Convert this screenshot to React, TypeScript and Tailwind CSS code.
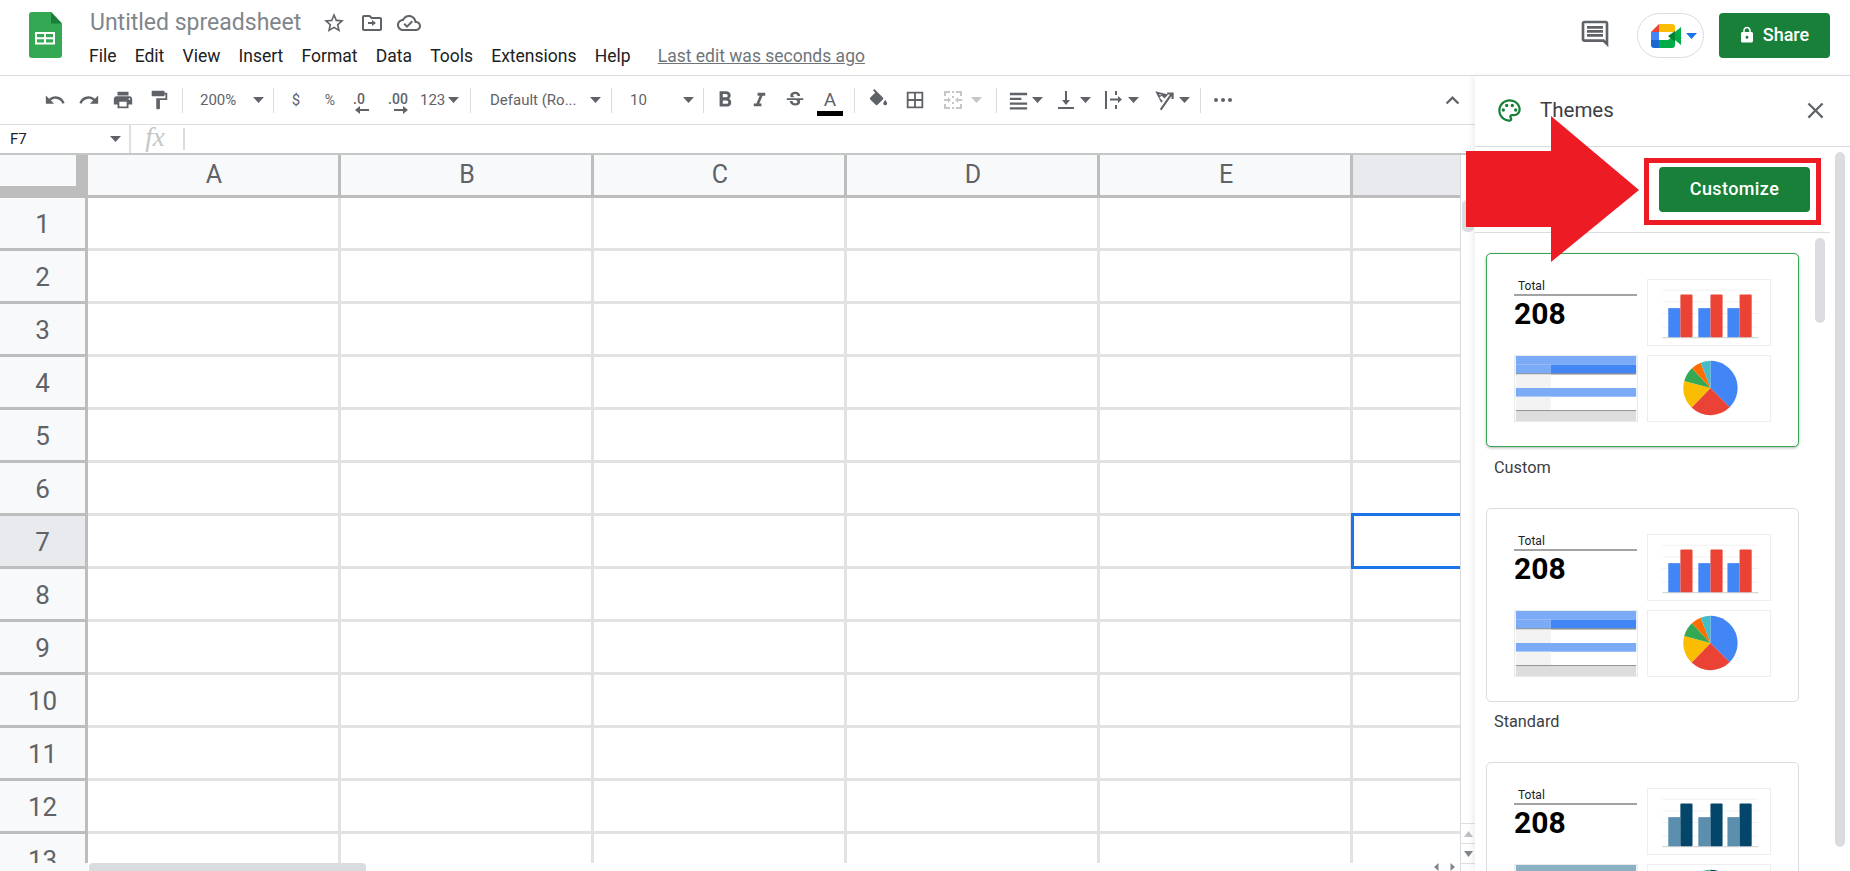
const columns = ["A", "B", "C", "D", "E"];
const rows = [1, 2, 3, 4, 5, 6, 7, 8, 9, 10, 11, 12, 13];
const menu = ["File", "Edit", "View", "Insert", "Format", "Data", "Tools", "Extensions", "Help"];

function Icon({ d, size = 24, className = "" }: { d: string; size?: number; className?: string }) {
  return (
    <svg width={size} height={size} viewBox="0 0 24 24" className={`fill-current ${className}`}>
      <path d={d} fillRule="evenodd" />
    </svg>
  );
}

function Caret({ color = "#5f6368", light = false }: { color?: string; light?: boolean }) {
  return (
    <svg width="11" height="6" viewBox="0 0 11 6" className="shrink-0">
      <path d="M0 0h11L5.5 6z" fill={light ? "#c4c7c5" : color} />
    </svg>
  );
}

function Sep() {
  return <div className="w-px h-[25px] bg-[#dadce0] shrink-0" />;
}

function Btn({ w, d, size = 22 }: { w: string; d: string; size?: number }) {
  return (
    <div className={`${w} flex items-center justify-center text-[#5f6368] shrink-0`}>
      <Icon d={d} size={size} />
    </div>
  );
}

const paths = {
  undo: "M12.5 8c-2.65 0-5.05.99-6.9 2.6L2 7v9h9l-3.62-3.62c1.39-1.16 3.16-1.88 5.12-1.88 3.54 0 6.55 2.31 7.6 5.5l2.37-.78C21.08 11.03 17.15 8 12.5 8z",
  redo: "M18.4 10.6C16.55 8.99 14.15 8 11.5 8c-4.65 0-8.58 3.03-9.96 7.22L3.9 16c1.05-3.19 4.05-5.5 7.6-5.5 1.95 0 3.73.72 5.12 1.88L13 16h9V7l-3.6 3.6z",
  print: "M19 8H5c-1.66 0-3 1.34-3 3v6h4v4h12v-4h4v-6c0-1.66-1.34-3-3-3zm-3 11H8v-5h8v5zm3-7c-.55 0-1-.45-1-1s.45-1 1-1 1 .45 1 1-.45 1-1 1zm-1-9H6v4h12V3z",
  paint: "M18 4V3c0-.55-.45-1-1-1H5c-.55 0-1 .45-1 1v4c0 .55.45 1 1 1h12c.55 0 1-.45 1-1V6h1v4H9v11c0 .55.45 1 1 1h2c.55 0 1-.45 1-1v-9h8V4h-3z",
  bold: "M15.6 10.79c.97-.67 1.65-1.77 1.65-2.79 0-2.26-1.75-4-4-4H7v14h7.04c2.09 0 3.71-1.7 3.71-3.79 0-1.52-.86-2.82-2.15-3.42zM10 6.5h3c.83 0 1.5.67 1.5 1.5s-.67 1.5-1.5 1.5h-3v-3zm3.5 9H10v-3h3.5c.83 0 1.5.67 1.5 1.5s-.67 1.5-1.5 1.5z",
  italic: "M10 4v3h2.21l-3.42 8H6v3h8v-3h-2.21l3.42-8H18V4z",
  strike: "M6.85 7.08C6.85 4.37 9.45 3 12.24 3c1.64 0 3 .49 3.9 1.28.77.65 1.46 1.73 1.46 3.24h-3.01c0-.31-.05-.59-.15-.85-.29-.86-1.2-1.28-2.25-1.28-1.86 0-2.34 1.02-2.34 1.7 0 .48.25.88.74 1.21.38.25.77.48 1.41.7H7.39c-.21-.34-.54-.89-.54-1.92zM21 12v-2H3v2h9.62c1.15.45 1.96.75 1.96 1.97 0 1-.81 1.67-2.28 1.67-1.54 0-2.93-.54-2.93-2.51H6.4c0 .55.08 1.13.24 1.58.81 2.29 3.29 3.3 5.67 3.3 2.27 0 5.3-.89 5.3-4.05 0-.3-.01-1.16-.48-1.94H21V12z",
  fill: "M16.56 8.94L7.62 0 6.21 1.41l2.38 2.38-5.15 5.15c-.59.59-.59 1.54 0 2.12l5.5 5.5c.29.29.68.44 1.06.44s.77-.15 1.06-.44l5.5-5.5c.59-.58.59-1.53 0-2.12zM19 11.5s-2 2.17-2 3.5c0 1.1.9 2 2 2s2-.9 2-2c0-1.33-2-3.5-2-3.5z",
  borders: "M3 3v18h18V3H3zm8 16H5v-6h6v6zm0-8H5V5h6v6zm8 8h-6v-6h6v6zm0-8h-6V5h6v6z",
  merge: "M3 3h6v2H5v3H3zM15 3h6v5h-2V5h-4zM3 16h2v3h4v2H3zM19 16h2v5h-6v-2h4zM11 3h2v2h-2zM11 8h2v2h-2zM11 14h2v2h-2zM11 19h2v2h-2zM3 11h4V9l3 3-3 3v-2H3zM21 11h-4V9l-3 3 3 3v-2h4z",
  align: "M3 4h18v2.5H3zM3 9h12v2.5H3zM3 14h18v2.5H3zM3 19h18v2.5H3z",
  valign: "M4 19h16v2H4zM11 3h2v9h3l-4 5-4-5h3z",
  wrap: "M3 3h2v18H3zM13 3h2v4h-2zM13 17h2v4h-2zM13 10.5h3V8l4 3.5-4 3.5v-2.5H8v-2h5z",
  rotate: "M3 4l12 3-3.5 3.5L9 8l-2.2 1.8 3.2 3.2-1.5 1.5zM6.2 6.6l1.3 1.3 1.4-.9zM20 5v6h-2V8.4L8.7 21.7l-1.4-1.4L16.6 7H14V5z",
  star: "M22 9.24l-7.19-.62L12 2 9.19 8.63 2 9.24l5.46 4.73L5.82 21 12 17.27 18.18 21l-1.63-7.03L22 9.24zM12 15.4l-3.76 2.27 1-4.28-3.32-2.88 4.38-.38L12 6.1l1.71 4.04 4.38.38-3.32 2.88 1 4.28L12 15.4z",
  move: "M20 6h-8l-2-2H4c-1.1 0-2 .9-2 2v12c0 1.1.9 2 2 2h16c1.1 0 2-.9 2-2V8c0-1.1-.9-2-2-2zm0 12H4V6h5.17l2 2H20v10zm-8-3v-2H8v-2h4V9l4 3-4 3z",
  cloud: "M19.35 10.04C18.67 6.59 15.64 4 12 4 9.11 4 6.6 5.64 5.35 8.04 2.34 8.36 0 10.91 0 14c0 3.31 2.69 6 6 6h13c2.76 0 5-2.24 5-5 0-2.64-2.05-4.78-4.65-4.96zM19 18H6c-2.21 0-4-1.79-4-4 0-2.05 1.53-3.76 3.56-3.97l1.07-.11.5-.95C8.08 7.14 9.94 6 12 6c2.62 0 4.88 1.86 5.39 4.43l.3 1.5 1.53.11c1.56.1 2.78 1.41 2.78 2.96 0 1.65-1.35 3-3 3zM10 17l-3.5-3.5 1.41-1.41L10 14.18l4.6-4.6 1.41 1.41z",
  comment: "M21.99 4c0-1.1-.89-2-1.99-2H4c-1.1 0-2 .9-2 2v12c0 1.1.9 2 2 2h14l4 4-.01-18zM20 4v13.17L18.83 16H4V4h16zM6 12h12v2H6zm0-3h12v2H6zm0-3h12v2H6z",
  palette: "M12 2C6.49 2 2 6.49 2 12s4.49 10 10 10c1.38 0 2.5-1.12 2.5-2.5 0-.61-.23-1.2-.64-1.67-.08-.1-.13-.21-.13-.33 0-.28.22-.5.5-.5H16c3.31 0 6-2.69 6-6 0-4.96-4.49-9-10-9zM12 4c4.41 0 8 3.14 8 7 0 2.21-1.79 4-4 4h-1.77c-1.38 0-2.5 1.12-2.5 2.5 0 .6.22 1.18.61 1.63.05.06.16.19.16.37 0 .28-.22.5-.5.5-4.41 0-8-3.59-8-8s3.59-8 8-8zM6.5 10a1.5 1.5 0 1 0 0 3 1.5 1.5 0 0 0 0-3zM9.5 6a1.5 1.5 0 1 0 0 3 1.5 1.5 0 0 0 0-3zM14.5 6a1.5 1.5 0 1 0 0 3 1.5 1.5 0 0 0 0-3zM17.5 10a1.5 1.5 0 1 0 0 3 1.5 1.5 0 0 0 0-3z",
  close: "M19 6.41L17.59 5 12 10.59 6.41 5 5 6.41 10.59 12 5 17.59 6.41 19 12 13.41 17.59 19 19 17.59 13.41 12z",
  lock: "M18 8h-1V6c0-2.76-2.24-5-5-5S7 3.24 7 6v2H6c-1.1 0-2 .9-2 2v10c0 1.1.9 2 2 2h12c1.1 0 2-.9 2-2V10c0-1.1-.9-2-2-2zM9 8V6c0-1.66 1.34-3 3-3s3 1.34 3 3v2H9zm3 9c-1.1 0-2-.9-2-2s.9-2 2-2 2 .9 2 2-.9 2-2 2z",
  up: "M7.41 15.41L12 10.83l4.59 4.58L18 14l-6-6-6 6z",
};

function SheetsLogo() {
  return (
    <svg width="33" height="46" viewBox="0 0 33 46" className="shrink-0">
      <path d="M3 0h19l11 11.5V43a3 3 0 0 1-3 3H3a3 3 0 0 1-3-3V3a3 3 0 0 1 3-3z" fill="#34a853" />
      <path d="M22 0l11 11.5H22z" fill="#188038" />
      <path d="M6 20h20v12.5H6zM8 22v3.2h7V22zm9 0v3.2h7V22zM8 27.2v3.3h7v-3.3zm9 0v3.3h7v-3.3z" fill="#fff" fillRule="evenodd" />
    </svg>
  );
}

function MeetLogo() {
  return (
    <svg width="30" height="24" viewBox="0 0 30 24">
      <path d="M8 0L0 8h8z" fill="#ea4335" />
      <path d="M8 0h13a3 3 0 0 1 3 3v5H8z" fill="#fbbc04" />
      <path d="M0 8h8v8H0z" fill="#4285f4" />
      <path d="M0 16h8v8H3a3 3 0 0 1-3-3z" fill="#1967d2" />
      <path d="M8 16h9l7-5v10a3 3 0 0 1-3 3H8z" fill="#00ac47" />
      <path d="M17 12l7-5v11z" fill="#00832d" />
      <path d="M24 8l6-5v18l-6-5z" fill="#00ac47" />
      <path d="M8 8h9v8H8z" fill="#fff" />
    </svg>
  );
}

type Palette = {
  light: string;
  dark: string;
  barA: string;
  barB: string;
  slices: [number, string][];
};

function slicePath(from: number, to: number) {
  const cx = 63.5;
  const cy = 33;
  const r = 28;
  const a = ((from - 90) * Math.PI) / 180;
  const b = ((to - 90) * Math.PI) / 180;
  const large = to - from > 180 ? 1 : 0;
  return `M${cx} ${cy}L${cx + r * Math.cos(a)} ${cy + r * Math.sin(a)}A${r} ${r} 0 ${large} 1 ${cx + r * Math.cos(b)} ${cy + r * Math.sin(b)}Z`;
}

function ThemeCard({ label, selected, palette }: { label?: string; selected?: boolean; palette: Palette }) {
  let start = 0;
  return (
    <div className="h-[254.5px] shrink-0">
      <div
        className={`w-[313px] h-[194px] rounded-[5px] bg-white pl-[27px] pt-[25px] border ${
          selected ? "border-[#34a853] shadow-[0_1px_3px_rgba(60,64,67,0.4)]" : "border-[#dadce0]"
        }`}
      >
        <div className="grid grid-cols-[124px_124px] grid-rows-[67px_67px] gap-[9px]">
          <div className="text-black">
            <div className="pl-[4px] h-[15px] text-[12px] leading-[15px] text-[#202124]">Total</div>
            <div className="h-[2px] w-[123px] bg-[#a3a3a3]" />
            <div className="text-[30px] leading-[36px] font-bold">208</div>
          </div>
          <svg width="124" height="67" viewBox="0 0 124 67" className="border border-[#eeeeee]">
            {[10, 22, 34, 48].map((y) => (
              <rect key={y} x="14" y={y} width="99" height="1" fill="#f1f1f1" />
            ))}
            <rect x="14" y="59" width="99" height="1" fill="#cccccc" />
            {[20, 51, 81].map((x) => (
              <g key={x}>
                <rect x={x} y="29" width="12.5" height="30" fill={palette.barA} />
                <rect x={x + 12.5} y="15" width="12.5" height="44" rx="1" fill={palette.barB} />
              </g>
            ))}
          </svg>
          <svg width="124" height="67" viewBox="0 0 124 67" className="border border-[#e8eaed]">
            <rect x="0" y="0" width="124" height="9" fill={palette.light} />
            <rect x="0" y="9" width="36" height="9" fill={palette.light} />
            <rect x="36" y="9" width="88" height="9" fill={palette.dark} />
            <rect x="0" y="18" width="124" height="1" fill="#666666" />
            <rect x="0" y="19" width="36" height="14" fill="#f3f3f3" />
            <rect x="0" y="33" width="124" height="9" fill={palette.light} />
            <rect x="0" y="42" width="36" height="14" fill="#f3f3f3" />
            <rect x="0" y="56" width="124" height="1" fill="#666666" />
            <rect x="0" y="57" width="124" height="10" fill="#dddddd" />
          </svg>
          <svg width="124" height="67" viewBox="0 0 124 67" className="border border-[#eeeeee]">
            {palette.slices.map(([end, color]) => {
              const path = slicePath(start, end);
              start = end;
              return <path key={end} d={path} fill={color} />;
            })}
          </svg>
        </div>
      </div>
      {label && <div className="pl-[8px] pt-[9.5px] text-[16.3px] leading-[22px] text-[#3c4043]">{label}</div>}
    </div>
  );
}

const defaultSlices: [number, string][] = [
  [135, "#4285f4"],
  [224, "#ea4335"],
  [285, "#fbbc04"],
  [317, "#34a853"],
  [339, "#ff6d01"],
  [360, "#46bdc6"],
];

const themes: { label?: string; selected?: boolean; palette: Palette }[] = [
  { label: "Custom", selected: true, palette: { light: "#7baaf7", dark: "#4285f4", barA: "#4285f4", barB: "#ea4335", slices: defaultSlices } },
  { label: "Standard", palette: { light: "#7baaf7", dark: "#4285f4", barA: "#4285f4", barB: "#ea4335", slices: defaultSlices } },
  {
    palette: {
      light: "#8ab2c5",
      dark: "#03466a",
      barA: "#5b8fad",
      barB: "#03466a",
      slices: [
        [135, "#03466a"],
        [224, "#5b8fad"],
        [285, "#8ab2c5"],
        [317, "#2e9e8f"],
        [339, "#3cb58f"],
        [360, "#46bd9a"],
      ],
    },
  },
];

function Toolbar() {
  return (
    <div className="h-[49px] shrink-0 border-b border-[#dadce0] flex items-center text-[15px] text-[#5f6368] pl-[38px]">
      <Btn w="w-[34px]" d={paths.undo} />
      <Btn w="w-[34px]" d={paths.redo} />
      <Btn w="w-[34px]" d={paths.print} />
      <Btn w="w-[38px]" d={paths.paint} />
      <div className="w-[4px]" />
      <Sep />
      <div className="w-[90px] flex items-center justify-between pl-[17px] pr-[9px]">
        <span>200%</span>
        <Caret />
      </div>
      <Sep />
      <div className="w-[196px] flex items-center pl-[5px]">
        <span className="w-[34px] text-center">$</span>
        <span className="w-[34px] text-center text-[14px]">%</span>
        <div className="w-[24px] flex flex-col items-center">
          <span className="text-[14px] leading-[14px] font-medium">.0</span>
          <svg width="14" height="8" viewBox="0 0 14 8" className="-mb-[6px] ml-[6px]">
            <path d="M0 4l5-4v3h9v2H5v3z" fill="#5f6368" />
          </svg>
        </div>
        <div className="w-[34px] ml-[10px] flex flex-col items-center">
          <span className="text-[14px] leading-[14px] font-medium">.00</span>
          <svg width="14" height="8" viewBox="0 0 14 8" className="-mb-[6px] ml-[6px]">
            <path d="M14 4L9 0v3H0v2h9v3z" fill="#5f6368" />
          </svg>
        </div>
        <span className="ml-[5px]">123</span>
        <span className="ml-[3px]">
          <Caret />
        </span>
      </div>
      <Sep />
      <div className="w-[140px] flex items-center justify-between pl-[19px] pr-[10px]">
        <span>Default (Ro...</span>
        <Caret />
      </div>
      <Sep />
      <div className="w-[91px] flex items-center justify-between pl-[18px] pr-[9px]">
        <span className="text-[#5f6368]">10</span>
        <Caret />
      </div>
      <Sep />
      <div className="w-[150px] flex items-center pl-[4px]">
        <Btn w="w-[34px]" d={paths.bold} size={26} />
        <Btn w="w-[35px]" d={paths.italic} size={23} />
        <Btn w="w-[35px]" d={paths.strike} size={22} />
        <div className="w-[36px] flex flex-col items-center">
          <span className="text-[19px] leading-[20px]">A</span>
          <div className="w-[26px] h-[5px] bg-black mt-[1px] -mb-[6px]" />
        </div>
      </div>
      <Sep />
      <div className="w-[141px] flex items-center pl-[6px]">
        <Btn w="w-[34px]" d={paths.fill} size={23} />
        <Btn w="w-[40px]" d={paths.borders} />
        <div className="w-[36px] flex items-center justify-center text-[#c4c7c5]">
          <Icon d={paths.merge} size={24} />
        </div>
        <Caret light />
      </div>
      <Sep />
      <div className="w-[203px] flex items-center pl-[8px]">
        <Btn w="w-[26px]" d={paths.align} size={23} />
        <span className="mr-[9px] ml-[1px]">
          <Caret />
        </span>
        <Btn w="w-[27px]" d={paths.valign} size={24} />
        <span className="mr-[10px] ml-[1px]">
          <Caret />
        </span>
        <Btn w="w-[26px]" d={paths.wrap} size={24} />
        <span className="mr-[11px] ml-[1px]">
          <Caret />
        </span>
        <Btn w="w-[29px]" d={paths.rotate} size={26} />
        <Caret />
      </div>
      <Sep />
      <div className="flex gap-[3px] ml-[13px]">
        <div className="w-[4px] h-[4px] rounded-full bg-[#5f6368]" />
        <div className="w-[4px] h-[4px] rounded-full bg-[#5f6368]" />
        <div className="w-[4px] h-[4px] rounded-full bg-[#5f6368]" />
      </div>
      <div className="ml-auto mr-[9px] text-[#5f6368]">
        <Icon d={paths.up} size={27} />
      </div>
    </div>
  );
}

function Grid() {
  return (
    <div className="flex-1 flex flex-col min-w-0 overflow-hidden">
      <div className="h-[43px] shrink-0 flex text-[25px] text-[#5f6368] border-b-[3px] border-[#bdbdbd]">
        <div className="w-[88px] shrink-0 bg-[#f8f9fa] relative border-r-[3px] border-[#bdbdbd]">
          <div className="absolute right-0 top-0 w-[9px] h-full bg-[#bdbdbd]" />
          <div className="absolute left-0 bottom-0 w-full h-[9px] bg-[#bdbdbd]" />
        </div>
        {columns.map((c) => (
          <div key={c} className="w-[253px] shrink-0 bg-[#f8f9fa] border-r-[3px] border-[#bdbdbd] flex items-center justify-center pl-[2px]">
            {c}
          </div>
        ))}
        <div className="flex-1 bg-[#e8eaed]" />
      </div>
      <div className="flex-1 overflow-hidden">
        {rows.map((r) => (
          <div key={r} className="h-[53px] flex">
            <div
              className={`w-[88px] shrink-0 border-r-[3px] border-b-[3px] border-[#bdbdbd] text-[26px] text-[#5f6368] flex items-center justify-center pt-[2px] ${
                r === 7 ? "bg-[#e8eaed]" : "bg-[#f8f9fa]"
              }`}
            >
              {r}
            </div>
            {columns.map((c) => (
              <div key={c} className="w-[253px] shrink-0 border-r-[3px] border-b-[3px] border-[#e2e2e2]" />
            ))}
            <div className={`flex-1 ${r === 7 ? "-mt-[3px] -ml-[2px] border-y-[3px] border-l-[3px] border-[#1a73e8]" : "border-b-[3px] border-[#e2e2e2]"}`} />
          </div>
        ))}
      </div>
      <div className="h-[8px] shrink-0 flex items-stretch bg-white">
        <div className="w-[88px] bg-[#f8f9fa] shrink-0" />
        <div className="w-[277px] ml-[1px] rounded-t-[4px] bg-[#dadce0]" />
        <div className="ml-auto flex items-center gap-[7px] mr-[4px]">
          <svg width="8" height="8" viewBox="0 0 8 8"><path d="M5.5 0v8L1 4z" fill="#80868b" /></svg>
          <svg width="8" height="8" viewBox="0 0 8 8"><path d="M2.5 0v8L7 4z" fill="#80868b" /></svg>
        </div>
      </div>
    </div>
  );
}

export default function App() {
  return (
    <div className="relative w-[1850px] h-[871px] overflow-hidden bg-white font-[Roboto,sans-serif] flex flex-col">
      {/* Header */}
      <header className="h-[76px] shrink-0 border-b border-[#dadce0] flex pl-[29px] pr-[20px] pt-[12px]">
        <SheetsLogo />
        <div className="ml-[28px] -mt-[2px]">
          <div className="flex items-center h-[26px] text-[#5f6368]">
            <span className="text-[23px] leading-[26px] text-[#80868b]">Untitled spreadsheet</span>
            <div className="ml-[21px] w-[24px]"><Icon d={paths.star} size={24} /></div>
            <div className="ml-[14px] w-[24px]"><Icon d={paths.move} size={24} /></div>
            <div className="ml-[13px] w-[24px]"><Icon d={paths.cloud} size={24} /></div>
          </div>
          <div className="flex items-center h-[26px] mt-[7px] text-[17.5px] text-[#202124] -ml-[1px] gap-[18.2px]">
            {menu.map((m) => (
              <span key={m}>{m}</span>
            ))}
            <span className="ml-[9px] text-[#70757a] underline">Last edit was seconds ago</span>
          </div>
        </div>
        <div className="ml-auto flex items-start">
          <div className="mt-[6px] ml-[1px] text-[#5f6368]"><Icon d={paths.comment} size={32} /></div>
          <div className="ml-[26px] mt-[1px] w-[67px] h-[45px] rounded-full border border-[#dadce0] flex items-center pl-[13px] gap-[5px]">
            <MeetLogo />
            <Caret color="#1a73e8" />
          </div>
          <div className="ml-[15px] mt-[1px] w-[111px] h-[45px] pb-[2px] pr-[2px] rounded-[4px] bg-[#188038] text-white text-[18px] font-medium flex items-center justify-center gap-[7px]">
            <Icon d={paths.lock} size={18} />
            Share
          </div>
        </div>
      </header>

      <div className="flex-1 flex min-h-0">
        {/* Sheet */}
        <div className="w-[1475px] shrink-0 flex flex-col">
          <Toolbar />
          <div className="h-[30px] shrink-0 border-b-2 border-[#c4c7c5] flex items-center">
            <div className="w-[129px] h-full flex items-center justify-between pl-[10px] pr-[8px] text-[15px] text-[#202124]">
              F7
              <Caret />
            </div>
            <div className="w-[2px] h-full bg-[#e0e0e0]" />
            <div className="w-[48px] pb-[3px] text-center text-[27px] italic leading-none text-[#c4c7c5] font-['Liberation_Serif',serif]">fx</div>
            <div className="ml-[4px] w-[2px] h-[22px] bg-[#dadce0]" />
          </div>
          <div className="flex-1 flex min-h-0">
            <Grid />
            <div className="w-[15px] shrink-0 border-l border-[#dadce0] flex flex-col bg-white">
              <div className="mt-[45px] mx-[1px] h-[32px] rounded-[5px] bg-[#dadce0]" />
              <div className="mt-auto h-[20px] border-t border-[#e0e0e0] flex items-center justify-center">
                <svg width="9" height="6" viewBox="0 0 9 6"><path d="M0 6h9L4.5 0z" fill="#bdc1c6" /></svg>
              </div>
              <div className="h-[20px] border-t border-[#e0e0e0] flex items-center justify-center">
                <svg width="9" height="6" viewBox="0 0 9 6"><path d="M0 0h9L4.5 6z" fill="#80868b" /></svg>
              </div>
              <div className="h-[8px] border-t border-[#e0e0e0]" />
            </div>
          </div>
        </div>

        {/* Themes panel */}
        <aside className="flex-1 relative bg-white flex flex-col shadow-[-3px_0_6px_rgba(60,64,67,0.08)]">
          <div className="h-[71px] shrink-0 border-b border-[#dadce0] flex items-center pl-[21px] pr-[21px] pb-[2px]">
            <Icon d={paths.palette} size={27} className="text-[#188038]" />
            <span className="ml-[17px] text-[20.5px] text-[#3c4043]">Themes</span>
            <Icon d={paths.close} size={27} className="ml-auto text-[#5f6368]" />
          </div>
          <div className="h-[86px] w-[355px] shrink-0 border-b border-[#dadce0] flex justify-end pt-[20px] pr-[20px]">
            <div className="w-[151px] h-[45px] pb-[2px] rounded-[4px] bg-[#188038] text-white text-[18px] tracking-[0.4px] font-medium flex items-center justify-center">
              Customize
            </div>
          </div>
          <div className="flex-1 overflow-hidden pl-[11px] pt-[20px]">
            {themes.map((t, i) => (
              <ThemeCard key={i} {...t} />
            ))}
          </div>
          <div className="absolute left-[340px] top-[162px] w-[10px] h-[85px] rounded-[5px] bg-[#dadce0]" />
          <div className="absolute left-[360px] top-[76px] w-[10px] h-[695px] rounded-[5px] bg-[#dadce0]" />
        </aside>
      </div>

      {/* Annotation */}
      <svg width="175" height="148" viewBox="0 0 175 148" className="absolute left-[1466px] top-[116px]">
        <path d="M0 35h85V0l88 74-88 72v-35H0z" fill="#ed1c24" />
      </svg>
      <div className="absolute left-[1644px] top-[158px] w-[177px] h-[67px] border-[5px] border-[#ed1c24]" />
    </div>
  );
}
